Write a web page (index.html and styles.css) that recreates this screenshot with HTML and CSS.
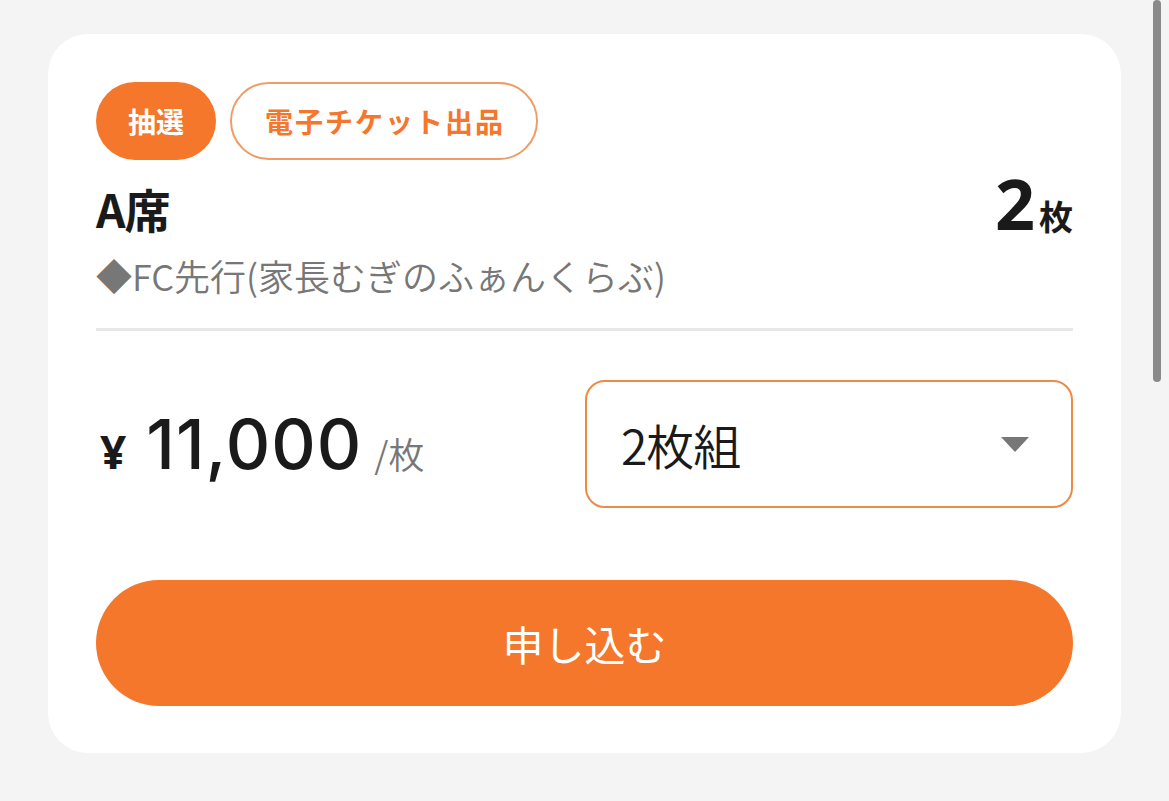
FILE: index.html
```html
<!DOCTYPE html>
<html lang="ja">
<head>
<meta charset="utf-8">
<link rel="stylesheet" href="styles.css">
</head>
<body>
<div class="page">
  <div class="card">
    <div class="tags">
      <span class="tag tag-fill">抽選</span>
      <span class="tag tag-outline">電子チケット出品</span>
    </div>
    <div class="title-row">
      <div class="title">A席</div>
      <div class="count"><span class="count-num">2</span><span class="count-unit">枚</span></div>
    </div>
    <div class="sub">◆FC先行(家長むぎのふぁんくらぶ)</div>
    <div class="divider"></div>
    <div class="price-row">
      <div class="price">
        <span class="yen">¥</span>
        <span class="amount">11,000</span>
        <span class="per">/枚</span>
      </div>
      <div class="select">
        <span class="select-text">2枚組</span>
        <span class="caret"></span>
      </div>
    </div>
    <button class="apply">申し込む</button>
  </div>
  <div class="scrollbar"></div>
</div>
</body>
</html>
```

FILE: styles.css
```css
* { box-sizing: border-box; }
html, body {
  margin: 0;
  padding: 0;
  background: #f4f4f4;
  font-family: "Noto Sans CJK JP", "Noto Sans", sans-serif;
  color: #1a1a1a;
}
.page {
  position: relative;
  width: 1169px;
  height: 801px;
  padding: 34px 0 0 48px;
}
.card {
  width: 1073px;
  height: 719px;
  background: #ffffff;
  border-radius: 40px;
  padding: 48px 48px 0 48px;
}
.tags {
  display: flex;
  gap: 14px;
}
.tag {
  height: 78px;
  border-radius: 39px;
  font-size: 28px;
  font-weight: 700;
  display: flex;
  align-items: center;
  justify-content: center;
  line-height: 1;
}
.tag-fill {
  width: 120px;
  background: #f4772b;
  color: #ffffff;
}
.tag-outline {
  width: 308px;
  border: 2px solid #ef9c66;
  color: #f4772b;
  letter-spacing: 2px;
  padding-left: 2px;
}
.title-row {
  display: flex;
  justify-content: space-between;
  align-items: flex-end;
  margin-top: 14px;
  height: 64px;
}
.title {
  font-size: 46px;
  font-weight: 700;
  line-height: 1;
  letter-spacing: -1px;
  padding-bottom: 7px;
}
.count {
  display: flex;
  align-items: baseline;
  font-weight: 700;
  line-height: 1;
}
.count-num {
  font-family: "Noto Sans", sans-serif;
  font-size: 70px;
  margin-right: 4px;
  line-height: 1;
}
.count-unit {
  font-size: 34px;
  line-height: 1;
}
.sub {
  font-size: 36px;
  font-weight: 350;
  color: #777777;
  line-height: 48px;
  margin-top: 13px;
}
.divider {
  height: 3px;
  background: #e8e8e8;
  margin-top: 29px;
}
.price-row {
  display: flex;
  justify-content: space-between;
  align-items: center;
  margin-top: 49px;
}
.price {
  display: flex;
  align-items: baseline;
}
.yen {
  font-family: "Noto Sans", sans-serif;
  font-size: 46px;
  font-weight: 700;
  margin-left: 4px;
  margin-right: 20px;
}
.amount {
  font-family: "Inter", sans-serif;
  font-size: 69px;
  font-weight: 500;
  letter-spacing: 1px;
}
.per {
  font-size: 36px;
  font-weight: 350;
  color: #777777;
  margin-left: 12px;
}
.select {
  width: 488px;
  height: 128px;
  border: 2px solid #ef8a45;
  border-radius: 20px;
  display: flex;
  align-items: center;
  justify-content: space-between;
  padding: 0 42px 0 34px;
}
.select-text {
  font-size: 48px;
  font-weight: 350;
  color: #1a1a1a;
  letter-spacing: -1px;
}
.caret {
  width: 0;
  height: 0;
  border-left: 14px solid transparent;
  border-right: 14px solid transparent;
  border-top: 15px solid #777777;
}
.apply {
  display: block;
  width: 977px;
  height: 126px;
  margin-top: 72px;
  border: none;
  border-radius: 63px;
  background: #f4772b;
  color: #ffffff;
  font-family: "Noto Sans CJK JP", sans-serif;
  font-size: 41px;
  font-weight: 400;
}
.scrollbar {
  position: absolute;
  top: 0;
  left: 1153px;
  width: 8px;
  height: 382px;
  background: #8a8a8a;
  border-radius: 4px;
}
```
